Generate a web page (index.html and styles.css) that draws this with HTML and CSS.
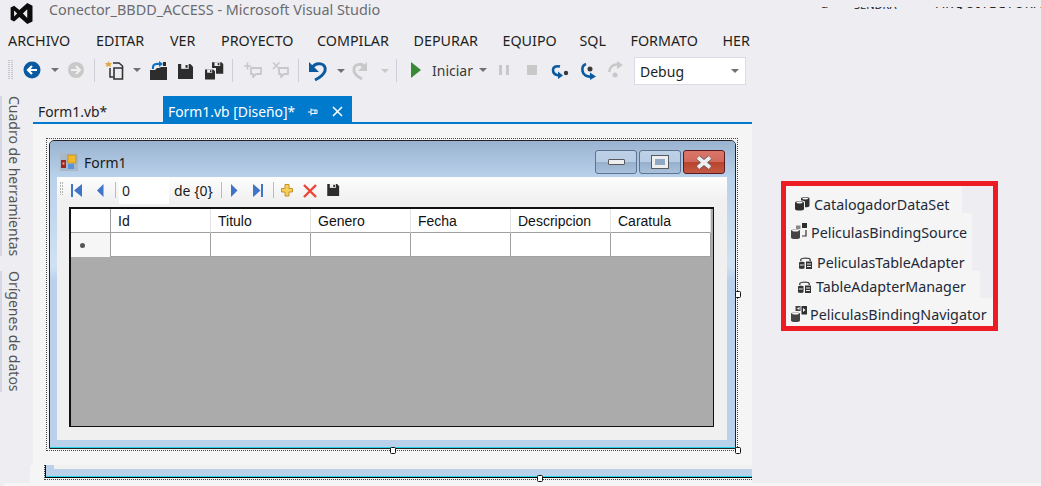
FILE: index.html
```html
<!DOCTYPE html>
<html lang="es">
<head>
<meta charset="utf-8">
<title>Conector_BBDD_ACCESS - Microsoft Visual Studio</title>
<link rel="stylesheet" href="styles.css">
</head>
<body>
<svg class="defs" width="0" height="0" aria-hidden="true">
  <defs>
    <symbol id="db" viewBox="0 0 15 15">
      <path d="M6 2.500C6 .5 14.500 .5 14.500 2.500V9.500C14.500 11 12.500 11.300 10 11.300V6C10 5 8 4.500 6 4.500Z" fill="#2f2f2f"/>
      <ellipse cx="10.200" cy="2.500" rx="3" ry="1" fill="#f5f5f5"/>
      <path d="M0 6.500C0 4.800 9 4.800 9 6.500V13C9 15 0 15 0 13Z" fill="#2f2f2f"/>
      <ellipse cx="4.500" cy="6.500" rx="3.200" ry="1" fill="#f5f5f5"/>
    </symbol>
    <symbol id="source" viewBox="0 0 16 16">
      <path d="M0 7.500C0 6 9 6 9 7.500V14.500C9 16.500 0 16.500 0 14.500Z" fill="#444"/>
      <ellipse cx="4.500" cy="7.500" rx="3.400" ry="1" fill="#f5f5f5"/>
      <rect x="5" y="2.500" width="4.500" height="3.500" fill="#888"/>
      <rect x="11" y="0" width="5" height="5" fill="#2f2f2f"/>
      <path d="M15 7V13H11" fill="none" stroke="#333" stroke-width="1.200"/>
    </symbol>
    <symbol id="adapter" viewBox="0 0 13 12">
      <path d="M1.800 4V2.800C1.800 .6 11.200 .6 11.200 2.800V4" fill="none" stroke="#444" stroke-width="1.400"/>
      <path d="M0 5.500C0 4.400 5.500 4.400 5.500 5.500V11C5.500 12.200 0 12.200 0 11Z" fill="#333"/>
      <rect x=".8" y="7.500" width="3.900" height="1" fill="#eee"/>
      <rect x="7" y="4.500" width="6" height="7.500" fill="#333"/>
      <path d="M8 7H12M8 9.500H12" stroke="#eee"/>
    </symbol>
    <symbol id="navigator" viewBox="0 0 16 16">
      <path d="M0 7.500C0 6 9 6 9 7.500V14.500C9 16.500 0 16.500 0 14.500Z" fill="#444"/>
      <ellipse cx="4.500" cy="7.500" rx="3.400" ry="1" fill="#f5f5f5"/>
      <rect x="4.500" y="0" width="5" height="5" fill="#444"/>
      <path d="M8.500 1V4L6 2.500Z" fill="#fff"/>
      <rect x="10.500" y="0" width="5.500" height="8.500" fill="#2f2f2f"/>
      <path d="M12 2L14.500 4L12 6Z" fill="#fff"/>
    </symbol>
    <symbol id="floppy" viewBox="0 0 14 14">
      <path d="M0 0H11.500L14 2.500V14H0Z" fill="#2d2d2d"/>
      <rect x="3" y="0" width="7" height="4.500" fill="#eeeef2"/>
      <rect x="7" y="1" width="2" height="2.500" fill="#2d2d2d"/>
    </symbol>
  </defs>
</svg>

<div class="app">
  <div class="stray"><span class="stray-a">a</span><span class="stray-b">SENDRA</span><span class="stray-c">ARQUITECTURA</span></div>

  <header class="titlebar">
    <svg class="logo" viewBox="0 0 26 24" width="26" height="21">
      <path d="M0 5L4 3L10 8L19 0L25 3V21L19 24L10 16L4 21L0 19ZM4 8.500V15.500L7.500 12ZM19 7L14 12L19 17Z" fill="#0c0c0c"/>
    </svg>
    <span class="title">Conector_BBDD_ACCESS - Microsoft Visual Studio</span>
  </header>

  <nav class="menubar">
    <span class="m-archivo">ARCHIVO</span>
    <span class="m-editar">EDITAR</span>
    <span class="m-ver">VER</span>
    <span class="m-proyecto">PROYECTO</span>
    <span class="m-compilar">COMPILAR</span>
    <span class="m-depurar">DEPURAR</span>
    <span class="m-equipo">EQUIPO</span>
    <span class="m-sql">SQL</span>
    <span class="m-formato">FORMATO</span>
    <span class="m-her">HER</span>
  </nav>

  <div class="toolbar">
    <svg class="tb-left" viewBox="0 57 425 28" width="425" height="28">
      <path d="M9 60V80M12 60V80" stroke="#c4c6ce" stroke-width="2" stroke-dasharray="1 1"/>
      <circle cx="32" cy="70" r="8.500" fill="#0b5a9f"/>
      <path d="M37 70H29M32 66L28 70L32 74" fill="none" stroke="#fff" stroke-width="2.200"/>
      <path d="M51 68H59L55 72Z" fill="#717171"/>
      <circle cx="76" cy="70" r="8" fill="#c9c9c9"/>
      <path d="M71 70H79M76 66L80 70L76 74" fill="none" stroke="#f1f1f1" stroke-width="2"/>
      <path d="M94.500 59V82" stroke="#ccced8"/>
      <path d="M108.500 61L109.500 63L112 63L110.500 65L111 67L108.500 66L106 67L106.500 65L105 63L107.500 63Z" fill="#e0a84a"/>
      <path d="M110 68V77H113.500" fill="none" stroke="#333" stroke-width="1.500"/>
      <path d="M113 63H119L122.500 66V68" fill="none" stroke="#333" stroke-width="1.500"/>
      <path d="M114 68H122.500V79H114Z" fill="#eeeef2" stroke="#333" stroke-width="1.600"/>
      <path d="M133 68H141L137 72Z" fill="#717171"/>
      <path d="M150 70H155L157 68H159L161 67H167V80H150Z" fill="#2d2d2d"/>
      <path d="M153 69V67C153 64 156 63.500 160 64" fill="none" stroke="#0e70c0" stroke-width="2.200"/>
      <path d="M159 61V67L163 64Z" fill="#0e70c0"/>
      <path d="M163 62H166V66H163Z" fill="#2d2d2d"/>
      <use href="#floppy" x="178" y="64" width="15" height="15"/>
      <use href="#floppy" x="212" y="62" width="11.500" height="12"/>
      <rect x="204" y="68" width="12" height="13" fill="#eeeef2"/>
      <use href="#floppy" x="205" y="69" width="10" height="11"/>
      <path d="M232.500 59V82" stroke="#ccced8"/>
      <path d="M244 66H251M247.500 62.500V69.500" stroke="#c8c8c8" stroke-width="1.600"/>
      <path d="M251 68H261V74H256L253 77V74H251Z" fill="none" stroke="#c8c8c8" stroke-width="1.800" stroke-linejoin="round"/>
      <path d="M273 62.500L279.500 69M279.500 62.500L273 69" stroke="#c8c8c8" stroke-width="1.600"/>
      <path d="M279 68H288V74H284L281 77V74H279Z" fill="none" stroke="#c8c8c8" stroke-width="1.800" stroke-linejoin="round"/>
      <path d="M298.500 59V82" stroke="#ccced8"/>
      <path d="M312 68C316 61 327 63 325 71C323 76 319 78 315 80" fill="none" stroke="#0b5a9f" stroke-width="3"/>
      <path d="M309 62V72H319Z" fill="#0b5a9f"/>
      <path d="M337 69H345L341 73Z" fill="#717171"/>
      <path d="M365 68C362 62 353 64 354 71C355 75 358 77 362 79" fill="none" stroke="#c8c8c8" stroke-width="3"/>
      <path d="M367 62V71H358Z" fill="#c8c8c8"/>
      <path d="M381 69H389L385 73Z" fill="#c8c8c8"/>
      <path d="M396.500 59V82" stroke="#ccced8"/>
      <path d="M411 62L421 70L411 78Z" fill="#388a34"/>
    </svg>
    <span class="run">Iniciar</span>
    <svg class="tb-right" viewBox="472 57 162 28" width="162" height="28">
      <path d="M479 68H487L483 72Z" fill="#717171"/>
      <path d="M500.500 65V75M507.500 65V75" stroke="#c8c8c8" stroke-width="3"/>
      <rect x="527" y="65" width="10" height="10" fill="#c8c8c8"/>
      <path d="M560 66.500C556 65.500 553 67 553 70C553 73 555 75 559 75.500" fill="none" stroke="#0b5a9f" stroke-width="2.600"/>
      <path d="M558 71.500V79L563 75.500Z" fill="#0b5a9f"/>
      <circle cx="566" cy="73" r="2.200" fill="#3a3a3a"/>
      <path d="M586 64C583 65 582 68 582.500 71C583 75 587 77 591 76.500" fill="none" stroke="#0b5a9f" stroke-width="2.600"/>
      <path d="M590 72.500L590 80L596 76.500Z" fill="#0b5a9f"/>
      <circle cx="590" cy="69" r="2.500" fill="#3a3a3a"/>
      <path d="M618 64.500C613 64 610 66 609 72" fill="none" stroke="#c8c8c8" stroke-width="2.400"/>
      <path d="M617 61L623 65L617 69Z" fill="#c8c8c8"/>
      <circle cx="615" cy="75" r="2.500" fill="#c8c8c8"/>
    </svg>
    <div class="combo"><span>Debug</span><i class="caret"></i></div>
  </div>

  <main class="workspace">
    <aside class="sidebar">
      <span class="side-tab side-toolbox">Cuadro de herramientas</span>
      <span class="side-tab side-data">Orígenes de datos</span>
    </aside>

    <section class="doc">
      <div class="tabs">
        <span class="tab">Form1.vb*</span>
        <span class="tab tab-active">Form1.vb [Diseño]*
          <svg class="pin" viewBox="0 0 10 10" width="10" height="10"><path d="M0 5H3M3 1.500V8.500M3 3H9V6.500H3M7 3V6.500" fill="none" stroke="#fff"/></svg>
          <svg class="close" viewBox="0 0 11 11" width="11" height="11"><path d="M1 1L10 10M10 1L1 10" stroke="#fff" stroke-width="1.600"/></svg>
        </span>
      </div>

      <div class="designer">
        <div class="selection">
          <div class="window">
            <div class="win-title">
              <svg class="form-icon" viewBox="0 0 18 18" width="18" height="18">
                <rect width="18" height="18" fill="#a9b8c9"/>
                <rect x="1" y="7" width="5" height="8" fill="#a3221c"/>
                <rect x="2.500" y="9.500" width="2" height="2" fill="#e9a9a0"/>
                <rect x="8" y="2" width="8" height="8" fill="#f0b92c" stroke="#b07f10" stroke-width=".6"/>
                <rect x="8" y="11" width="6" height="5" fill="#5a92dd"/>
              </svg>
              <span class="form-name">Form1</span>
              <div class="win-controls">
                <div class="wc wc-min"><i></i></div>
                <div class="wc wc-max"><i></i></div>
                <div class="wc wc-close">
                  <svg viewBox="0 0 18 15" width="18" height="15"><path d="M3 2.500L15 12.500M15 2.500L3 12.500" stroke="#59595f" stroke-width="5.400"/><path d="M3 2.500L15 12.500M15 2.500L3 12.500" stroke="#eee" stroke-width="3.800"/></svg>
                </div>
              </div>
            </div>
            <div class="client">
              <div class="navstrip">
                <svg class="nav-a" viewBox="57 177 62 27" width="62" height="27">
                  <path d="M60.500 182V195M62.500 182V195" stroke="#b4b4b4" stroke-dasharray="2 1"/>
                  <rect x="71" y="184" width="2" height="13" fill="#3f74c8"/>
                  <path d="M82 184V197L74 190.500Z" fill="#3f74c8"/>
                  <path d="M103.500 184V197L97 190.500Z" fill="#3f74c8"/>
                  <path d="M115.500 182V198" stroke="#bbb"/>
                </svg>
                <div class="pos">0</div>
                <span class="of">de {0}</span>
                <svg class="nav-b" viewBox="216 177 124 27" width="124" height="27">
                  <path d="M221.500 182V198" stroke="#bbb"/>
                  <path d="M231 184V197L237.500 190.500Z" fill="#3f74c8"/>
                  <path d="M253 184V197L260.500 190.500Z" fill="#3f74c8"/>
                  <rect x="261" y="184" width="2" height="13" fill="#3f74c8"/>
                  <path d="M273.500 182V198" stroke="#bbb"/>
                  <path d="M285 184.500H289V188.500H292.500V192H289V196H285V192H281.500V188.500H285Z" fill="#f4cf5a" stroke="#c8902a"/>
                  <path d="M304 185L316 197M316 185L304 197" stroke="#ee4433" stroke-width="2.400"/>
                  <use href="#floppy" x="327" y="184" width="12.500" height="12"/>
                </svg>
              </div>
              <div class="grid">
                <div class="gh corner"></div>
                <div class="gh">Id</div>
                <div class="gh">Titulo</div>
                <div class="gh">Genero</div>
                <div class="gh">Fecha</div>
                <div class="gh">Descripcion</div>
                <div class="gh">Caratula</div>
                <div class="rowhead"><i></i></div>
                <div class="gc"></div>
                <div class="gc"></div>
                <div class="gc"></div>
                <div class="gc"></div>
                <div class="gc"></div>
                <div class="gc"></div>
              </div>
            </div>
          </div>
          <i class="handle handle-side"></i>
          <i class="handle handle-bottom"></i>
          <i class="handle handle-corner"></i>
        </div>
      </div>

      <div class="strip">
        <div class="strip-sel">
          <div class="strip-win"><div class="strip-client"></div></div>
          <i class="handle handle-strip"></i>
        </div>
      </div>
      <div class="foot"></div>
    </section>

    <aside class="tray">
      <div class="tray-box">
        <div class="comp c1"><svg class="ic1" width="15" height="15"><use href="#db"/></svg><span>CatalogadorDataSet</span></div>
        <div class="comp c2"><svg class="ic2" width="16" height="16"><use href="#source"/></svg><span>PeliculasBindingSource</span></div>
        <div class="comp c3"><svg class="ic3" width="13" height="12"><use href="#adapter"/></svg><span>PeliculasTableAdapter</span></div>
        <div class="comp c4"><svg class="ic4" width="13" height="12"><use href="#adapter"/></svg><span>TableAdapterManager</span></div>
        <div class="comp c5"><svg class="ic5" width="16" height="16"><use href="#navigator"/></svg><span>PeliculasBindingNavigator</span></div>
      </div>
    </aside>
  </main>
</div>
</body>
</html>
```

FILE: styles.css
```css
* { box-sizing: border-box; }
html, body { margin: 0; padding: 0; }
body { background: #eeeef2; font-family: "Noto Sans", "Open Sans", sans-serif; color: #1e1e1e; }
.defs { position: absolute; }
.app { position: relative; width: 1041px; height: 486px; overflow: hidden; }

.stray { position: absolute; top: 7px; left: 0; width: 1041px; height: 2px; overflow: hidden; font-size: 13px; line-height: 2px; color: #222; }
.stray span { position: absolute; top: -5px; }
.stray .stray-a { left: 821px; }
.stray .stray-b { left: 854px; font-size: 11px; top: -3px; }
.stray .stray-c { left: 936px; letter-spacing: .9px; }

.titlebar { height: 28px; display: flex; align-items: flex-start; padding: 3px 0 0 9px; }
.logo { flex: none; }
.title { margin: -2px 0 0 14px; font-size: 14.400px; line-height: 18px; color: #6b6b70; white-space: nowrap; }

.menubar { height: 29px; display: flex; align-items: center; padding: 0 0 4px 8px; font-size: 14.300px; white-space: nowrap; }
.menubar span { flex: none; }
.m-archivo { width: 88px; }
.m-editar { width: 74px; }
.m-ver { width: 51px; }
.m-proyecto { width: 96px; }
.m-compilar { width: 96.500px; }
.m-depurar { width: 89px; }
.m-equipo { width: 77px; }
.m-sql { width: 51px; }
.m-formato { width: 92px; }

.toolbar { height: 28px; display: flex; align-items: stretch; }
.toolbar svg { flex: none; display: block; }
.run { width: 47px; padding-left: 7px; font-size: 14px; line-height: 28px; color: #3a3a3a; white-space: nowrap; }
.combo { width: 112px; display: flex; align-items: center; justify-content: space-between; padding: 0 6px 0 5px; background: #fff; border: 1px solid #d9dbe6; font-size: 14px; color: #1e1e1e; }
.caret { width: 0; height: 0; border: 4px solid transparent; border-top: 4px solid #717171; margin-top: 4px; }

.workspace { margin-top: 11px; display: flex; align-items: flex-start; }
.sidebar { width: 33px; flex: none; height: 390px; display: flex; flex-direction: column; align-items: flex-start; }
.side-tab { writing-mode: vertical-rl; font-size: 14px; line-height: 14px; color: #555; border-left: 2px solid #d5d7e4; padding-left: 5px; white-space: nowrap; }
.side-toolbox { height: 160px; }
.side-data { height: 121px; margin-top: 15px; }

.doc { width: 719px; flex: none; }
.tabs { height: 28px; display: flex; align-items: stretch; border-bottom: 2px solid #007acc; }
.tab { width: 130px; padding: 5px 0 0 5px; font-size: 13.900px; line-height: 22px; white-space: nowrap; }
.tab-active { width: 189px; background: #007acc; color: #fff; display: flex; align-items: flex-start; padding-left: 5px; }
.pin { margin: 6px 0 0 13px; flex: none; }
.close { margin: 5px 0 0 14px; flex: none; }

.designer { height: 341px; background: #f5f5f5; padding: 14px 0 0 13px; }
.selection { position: relative; width: 692px; height: 313px; border: 1px dotted #444; padding: 1px 0 0 2px; }
.window { width: 687px; height: 309px; border: 1px solid #222; border-radius: 5px 5px 0 0; background: linear-gradient(#9ab3d0 0, #b9d1ea 37px, #d0e1f3 125px, #b9d1ea 140px); box-shadow: inset 0 -1px 0 #25d3e8; display: flex; flex-direction: column; }
.win-title { height: 36px; flex: none; display: flex; align-items: flex-start; padding: 0 0 0 10px; background: linear-gradient(#9ab3d0, #b9d1ea); border-radius: 4px 4px 0 0; }
.form-icon { margin-top: 12px; flex: none; }
.form-name { margin-left: 6px; margin-top: 12px; font-size: 14px; line-height: 20px; color: #1a1a1a; }
.win-controls { margin-left: auto; margin-right: 10px; margin-top: 9px; display: flex; gap: 2px; }
.wc { width: 42px; height: 24px; border: 1px solid #5d7391; border-radius: 3px; background: linear-gradient(#bcd0e6 0, #b8cde4 48%, #96afcb 50%, #a9c1db 100%); display: flex; align-items: center; justify-content: center; }
.wc-min i { width: 17px; height: 6px; background: #eee; border: 1px solid #59595f; border-radius: 1px; }
.wc-max i { width: 16px; height: 12px; border: 3px solid #eee; outline: 1px solid #59595f; background: #8fa8c4; }
.wc-close { border-color: #5b1a22; background: linear-gradient(#d9776a 0, #d26a5c 48%, #b8432b 50%, #c45a44 100%); }

.client { margin: 0 8px 0 7px; height: 263px; background: #f0f0f0; }
.navstrip { height: 27px; display: flex; align-items: stretch; background: linear-gradient(#fdfdfd, #efefef); }
.navstrip svg { display: block; flex: none; }
.pos { width: 50px; padding-left: 3px; background: #fff; font-size: 14px; line-height: 27px; }
.of { width: 47px; padding-left: 5px; font-size: 14px; line-height: 27px; color: #1a1a1a; white-space: nowrap; }
.grid { margin: 3px 0 0 12px; width: 645px; height: 220px; border-style: solid; border-color: #111; border-width: 2px 1px 1px 2px; background: #ababab; display: grid; grid-template-columns: 40px repeat(6, 100px); grid-template-rows: 24px 24px; font-family: "Liberation Sans", Arial, sans-serif; font-size: 14px; color: #111; }
.gh { background: #fff; border-right: 1px solid #e3e3e3; border-bottom: 1px solid #a0a0a0; padding: 4px 0 0 7px; line-height: 17px; }
.corner { border-right: 1px solid #a0a0a0; }
.rowhead { background: #f6f6f6; display: flex; align-items: center; padding: 1px 0 0 9px; border-right: 1px solid #a0a0a0; }
.rowhead i { width: 5px; height: 5px; border-radius: 50%; background: #555; }
.gc { background: #fff; border-right: 1px solid #a0a0a0; border-bottom: 1px solid #a0a0a0; }

.handle { position: absolute; width: 6px; height: 7px; background: #fff; border: 1px solid #111; border-radius: 1.500px; }
.handle-side { left: 688px; top: 152px; }
.handle-bottom { left: 343px; top: 308px; }
.handle-corner { left: 688px; top: 308px; }

.strip { height: 18px; background: #f5f5f5; margin-left: -3px; padding-left: 14px; }
.strip-sel { position: relative; height: 15px; border-left: 1px dotted #444; border-bottom: 1px dotted #444; }
.strip-win { height: 13px; border-left: 1px solid #111; border-bottom: 1px solid #000; background: #b9d1ea; box-shadow: inset 0 -1px 0 #25d3e8; padding-left: 8px; }
.strip-client { height: 4px; background: #f0f0f0; }
.handle-strip { left: 492px; top: 10px; }
.foot { height: 3px; margin-left: -29px; width: 1037px; background: #f5f5f5; }

.tray { flex: none; margin: 85px 0 0 29px; }
.tray-box { width: 217px; height: 150px; border: 5px solid #ed1c24; font-size: 14.300px; color: #1e2a3a; }
.comp { position: relative; background: #f5f5f5; white-space: nowrap; line-height: 14px; }
.comp span { position: relative; z-index: 1; }
.comp svg { position: absolute; display: block; }
.c1 { width: 176px; height: 27px; padding: 12px 0 0 28px; }
.c2 { width: 186px; height: 28px; padding: 13px 0 0 25px; }
.c3 { width: 186px; height: 30px; padding: 15px 0 0 31px; }
.c4 { width: 194px; height: 27px; padding: 9px 0 0 30px; }
.c5 { width: 207px; height: 28px; padding: 10px 0 0 24px; }
.ic1 { left: 9px; top: 10px; }
.ic2 { left: 5px; top: 10px; }
.ic3 { left: 13px; top: 16px; }
.ic4 { left: 12px; top: 10px; }
.ic5 { left: 5px; top: 8px; }
```
